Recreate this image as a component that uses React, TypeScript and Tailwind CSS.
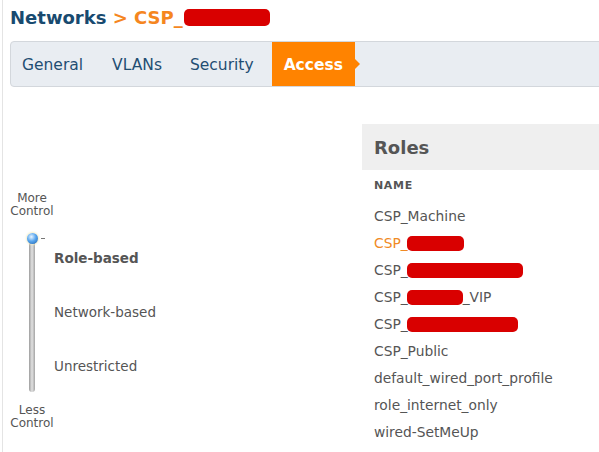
import React from 'react';

const Redact: React.FC<{ w: number; h?: number; className?: string }> = ({ w, h = 15, className = '' }) => (
  <span
    className={`inline-block align-middle rounded-[5px] bg-[#d90000] ${className}`}
    style={{ width: w, height: h }}
  />
);

const tabs = ['General', 'VLANs', 'Security'];

const roles: { pre: string; blot?: number; post?: string; active?: boolean }[] = [
  { pre: 'CSP_Machine' },
  { pre: 'CSP_', blot: 57, active: true },
  { pre: 'CSP_', blot: 116 },
  { pre: 'CSP_', blot: 56, post: '_VIP' },
  { pre: 'CSP_', blot: 111 },
  { pre: 'CSP_Public' },
  { pre: 'default_wired_port_profile' },
  { pre: 'role_internet_only' },
  { pre: 'wired-SetMeUp' },
];

export default function App() {
  return (
    <div className="w-full h-[452px] overflow-hidden bg-white font-['DejaVu_Sans',sans-serif]">
      <div className="ml-[2px] h-full border-l border-[#e4e4e4] pl-[7px]">
        {/* breadcrumb title */}
        <div className="pt-[6px] leading-[24px] text-[18px] font-bold whitespace-nowrap">
          <span className="text-[#184a6f]">Networks</span>
          <span className="text-[#f5861f]"> &gt; CSP_</span>
          <Redact w={86} h={17} className="ml-[1px] -mt-[4px]" />
        </div>

        {/* tab bar */}
        <div className="mt-[11px] -mr-[20px] flex h-[46px] items-stretch rounded-l-[4px] border border-[#d3d7dc] bg-[#e9edf2] text-[15.5px]">
          {tabs.map((t, i) => (
            <div
              key={t}
              className={`flex items-center pt-[3px] text-[#1f4e72] ${i === 0 ? 'pl-[11px] pr-[15px]' : 'px-[14px]'}`}
            >
              {t}
            </div>
          ))}
          <div className="relative ml-[4px] flex items-center bg-[#ff8300] px-[12px] pt-[3px] font-bold text-white">
            Access
            <span className="absolute left-full top-1/2 -translate-y-1/2 border-y-[5px] border-l-[5px] border-y-transparent border-l-[#ff8300]" />
          </div>
        </div>

        {/* content */}
        <div className="mt-[37px] flex">
          {/* access control slider */}
          <div className="w-[352px] shrink-0 pt-[68px] text-[#555] text-[13.5px]">
            <div className="w-[44px] text-center text-[12px] leading-[13px]">
              More
              <br />
              Control
            </div>
            <div className="mt-[15px] flex">
              <div className="flex w-[44px] flex-col items-center">
                <div className="relative h-[11px] w-[11px] rounded-full bg-[radial-gradient(circle_at_40%_35%,#eaf6ff_0%,#5aa7ee_45%,#1c5fab_100%)] shadow-[0_0_2px_1px_#f3eec8]">
                  <span className="absolute left-[14px] top-[5px] h-px w-[4px] bg-[#777]" />
                </div>
                <div className="-mt-[1px] h-[149px] w-[6px] rounded-b-[3px] bg-[linear-gradient(90deg,#9c9c9c,#e2e2e2_50%,#a4a4a4)]" />
              </div>
              <div className="flex flex-col gap-[4px]">
                <div className="flex h-[50px] items-center font-bold">Role-based</div>
                <div className="flex h-[50px] items-center">Network-based</div>
                <div className="flex h-[50px] items-center">Unrestricted</div>
              </div>
            </div>
            <div className="mt-[12px] w-[44px] text-center text-[12px] leading-[13px]">
              Less
              <br />
              Control
            </div>
          </div>

          {/* roles list */}
          <div className="flex-1 -mr-[2px] border-r border-[#e6e6e6]">
            <div className="flex h-[46px] items-center bg-[#efefef] pl-[12px] text-[18px] font-bold text-[#555]">
              Roles
            </div>
            <div className="flex h-[33px] items-center pl-[12px] text-[11px] font-bold tracking-[0.06em] text-[#555]">
              NAME
            </div>
            {roles.map((r, i) => (
              <div
                key={i}
                className={`flex h-[27px] items-center pl-[12px] text-[13.8px] whitespace-nowrap ${r.active ? 'text-[#f08a24]' : 'text-[#555]'}`}
              >
                {r.pre}
                {r.blot && <Redact w={r.blot} h={15} className="-ml-[1px]" />}
                {r.post}
              </div>
            ))}
          </div>
        </div>
      </div>
    </div>
  );
}
